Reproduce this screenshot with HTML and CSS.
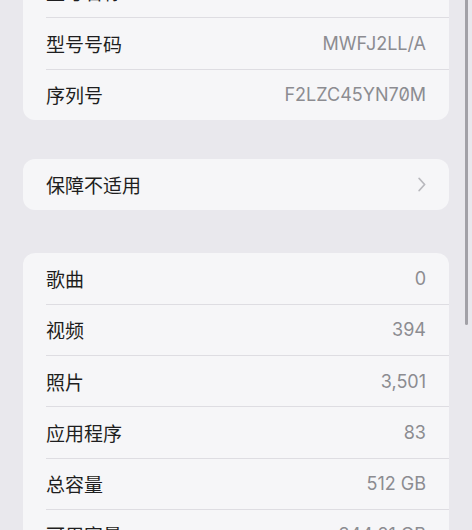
FILE: index.html
```html
<!DOCTYPE html>
<html lang="zh-CN">
<head>
<meta charset="utf-8">
<link rel="stylesheet" href="styles.css">
</head>
<body>
<div class="screen">
  <div class="content">
    <section class="card card-first">
      <div class="row"><span class="label">型号名称</span><span class="value">iPhone 15 Pro Max</span></div>
      <div class="row"><span class="label">型号号码</span><span class="value">MWFJ2LL/A</span></div>
      <div class="row"><span class="label">序列号</span><span class="value serial">F2LZC45YN70M</span></div>
    </section>
    <section class="card card-warranty">
      <div class="row"><span class="label">保障不适用</span>
        <svg class="chevron" width="8" height="15" viewBox="0 0 8 15"><polyline points="1.2,1.5 6.6,7.5 1.2,13.5" fill="none" stroke="#b9b9be" stroke-width="1.8" stroke-linecap="round" stroke-linejoin="round"/></svg>
      </div>
    </section>
    <section class="card card-stats">
      <div class="row"><span class="label">歌曲</span><span class="value">0</span></div>
      <div class="row"><span class="label">视频</span><span class="value">394</span></div>
      <div class="row"><span class="label">照片</span><span class="value">3,501</span></div>
      <div class="row"><span class="label">应用程序</span><span class="value">83</span></div>
      <div class="row"><span class="label">总容量</span><span class="value">512 GB</span></div>
      <div class="row"><span class="label">可用容量</span><span class="value">344.21 GB</span></div>
    </section>
  </div>
  <div class="scroll-thumb"></div>
</div>
</body>
</html>
```
FILE: styles.css
```css
html, body {
  margin: 0;
  padding: 0;
}
body {
  background: #e9e8ed;
  width: 472px;
  height: 530px;
  overflow: hidden;
}
.screen {
  position: relative;
  width: 472px;
  height: 530px;
  overflow: hidden;
  background: #e9e8ed;
}
.content {
  margin-top: -34px;
  padding: 0 23px;
  display: flex;
  flex-direction: column;
}
.card {
  background: #f6f6f8;
  border-radius: 12px;
  overflow: hidden;
}
.card-warranty {
  margin-top: 39px;
}
.card-stats {
  margin-top: 42.5px;
}
.row {
  box-sizing: border-box;
  height: 51.25px;
  margin-left: 23px;
  padding-right: 23px;
  display: flex;
  align-items: center;
  justify-content: space-between;
  border-top: 1px solid #dedde2;
}
.row:first-child {
  border-top: none;
}
.label {
  font-family: "Noto Sans CJK SC", sans-serif;
  font-size: 19px;
  color: #1e1e20;
}
.value {
  font-family: "Inter", "Liberation Sans", sans-serif;
  font-size: 18px;
  color: #8c8c91;
}
.serial {
  font-feature-settings: "zero" 1;
}
.chevron {
  display: block;
  margin-right: 0;
}
.scroll-thumb {
  position: absolute;
  right: 4px;
  top: -10px;
  width: 3px;
  height: 335px;
  border-radius: 2px;
  background: #a2a1a7;
}
```
